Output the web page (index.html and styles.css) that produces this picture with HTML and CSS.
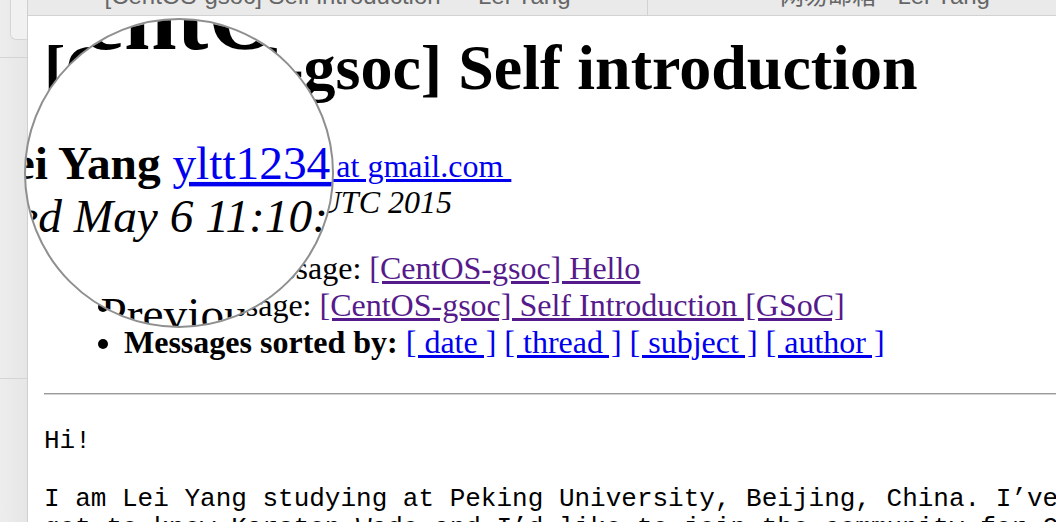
FILE: index.html
```html
<!DOCTYPE html>
<html lang="en">
<head>
<meta charset="utf-8">
<title>[CentOS-gsoc] Self introduction</title>
<link rel="stylesheet" href="styles.css">
</head>
<body>
<div class="window">
  <aside class="side">
    <div class="side-tab"></div>
    <div class="side-pane"></div>
  </aside>
  <div class="main">
    <div class="tabbar">
      <div class="tab tab-left"><span class="tab-title">[CentOS-gsoc] Self introduction — Lei Yang</span></div>
      <div class="tab tab-right"><span class="tab-title">网易邮箱 - Lei Yang</span></div>
    </div>
    <div class="viewport">
      <div class="page page-main">
        <h1 class="title">[CentOS-gsoc] Self introduction</h1>
        <div class="meta">
          <b class="name">Lei Yang</b> <a class="link author" href="#">yltt1234 at gmail.com&nbsp;</a><br>
          <i>Wed May  6 11:10:44 UTC 2015</i>
        </div>
        <ul class="nav">
          <li>Previous message: <a class="link link-visited" href="#">[CentOS-gsoc] Hello</a></li>
          <li>Next message: <a class="link link-visited" href="#">[CentOS-gsoc] Self Introduction [GSoC]</a></li>
          <li><b>Messages sorted by:</b> <a class="link" href="#">[ date ]</a> <a class="link" href="#">[ thread ]</a> <a class="link" href="#">[ subject ]</a> <a class="link" href="#">[ author ]</a></li>
        </ul>
        <hr class="rule">
        <pre class="body-text">Hi!

I am Lei Yang studying at Peking University, Beijing, China. I’ve
got to know Karsten Wade and I’d like to join the community for GSoC.</pre>
      </div>
    </div>
  </div>
  <div class="lens">
    <div class="page lens-inner">
      <h1 class="title">[CentOS-gsoc] Self introduction</h1>
      <div class="meta">
        <b class="name">Lei Yang</b> <a class="link author" href="#">yltt1234 at gmail.com&nbsp;</a><br>
        <i>Wed May  6 11:10:44 UTC 2015</i>
      </div>
      <ul class="nav">
        <li>Previous message: <a class="link link-visited" href="#">[CentOS-gsoc] Hello</a></li>
        <li>Next message: <a class="link link-visited" href="#">[CentOS-gsoc] Self Introduction [GSoC]</a></li>
        <li><b>Messages sorted by:</b> <a class="link" href="#">[ date ]</a> <a class="link" href="#">[ thread ]</a></li>
      </ul>
    </div>
  </div>
</div>
</body>
</html>
```

FILE: styles.css
```css
html, body {
  margin: 0;
  padding: 0;
  background: #ffffff;
}

.window {
  position: relative;
  display: flex;
  width: 1056px;
  height: 522px;
  overflow: hidden;
}

/* left browser chrome strip */
.side {
  flex: none;
  width: 27px;
  border-right: 1px solid #cfcfcf;
  background: linear-gradient(to right, #ededed, #e6e6e6);
  display: flex;
  flex-direction: column;
}

.side-tab {
  height: 39px;
  margin-left: 10px;
  border-left: 1px solid #d6d6d6;
  border-bottom: 1px solid #d6d6d6;
  border-bottom-left-radius: 6px;
  background: #f1f1f1;
}

.side-pane {
  margin-top: 17px;
  height: 320px;
  border-top: 1px solid #d4d4d4;
  border-bottom: 1px solid #d4d4d4;
}

.main {
  flex: 1;
  min-width: 0;
  display: flex;
  flex-direction: column;
}

/* top tab strip, mostly cut off */
.tabbar {
  flex: none;
  height: 15px;
  border-bottom: 1px solid #d2d2d2;
  background: #eaeaea;
  display: flex;
  overflow: hidden;
}

.tab {
  flex: none;
  display: flex;
  justify-content: center;
  align-items: flex-start;
  overflow: hidden;
}

.tab-left {
  width: 619px;
  border-right: 1px solid #d2d2d2;
}

.tab-right {
  width: 474px;
}

.tab-title {
  margin-top: -16px;
  font-family: "Liberation Sans", "Noto Sans CJK SC", sans-serif;
  font-size: 24px;
  line-height: 24px;
  color: #666666;
  white-space: nowrap;
}

/* page content */
.viewport {
  flex: 1;
  background: #ffffff;
  overflow: hidden;
}

.page {
  width: 1100px;
  box-sizing: border-box;
  padding: 0 16px;
  font-family: "Liberation Serif", "Times New Roman", serif;
  color: #000000;
}

.title {
  margin: 16px 0 44px;
  font-size: 64px;
  line-height: 72px;
  font-weight: bold;
  white-space: nowrap;
}

.meta {
  font-size: 32px;
  line-height: 36px;
  white-space: nowrap;
}

.page-main .author {
  margin-left: 49px;
}

.nav {
  margin: 30px 0 32px;
  padding-left: 80px;
  font-size: 32px;
  line-height: 37px;
  list-style: disc;
  white-space: nowrap;
}

.link {
  color: #0000ee;
  text-decoration: underline;
}

.link-visited {
  color: #551a8b;
}

.rule {
  margin: 0;
  height: 0;
  border: none;
  border-top: 1px solid #9b9b9b;
  border-bottom: 1px solid #d2d2d2;
}

.body-text {
  margin: 32px 0 0;
  font-family: "Liberation Mono", "Courier New", monospace;
  font-size: 26px;
  line-height: 29px;
  white-space: pre;
}

/* magnifier lens overlay */
.lens {
  position: absolute;
  left: 24px;
  top: 18px;
  width: 310px;
  height: 310px;
  box-sizing: border-box;
  border: 2px solid #8f8f8f;
  border-radius: 50%;
  overflow: hidden;
  background: #ffffff;
}

.lens-inner {
  position: absolute;
  left: 0;
  top: 0;
  transform-origin: 0 0;
  transform: translate(-67.6px, -79.3px) scale(1.48);
}
```
